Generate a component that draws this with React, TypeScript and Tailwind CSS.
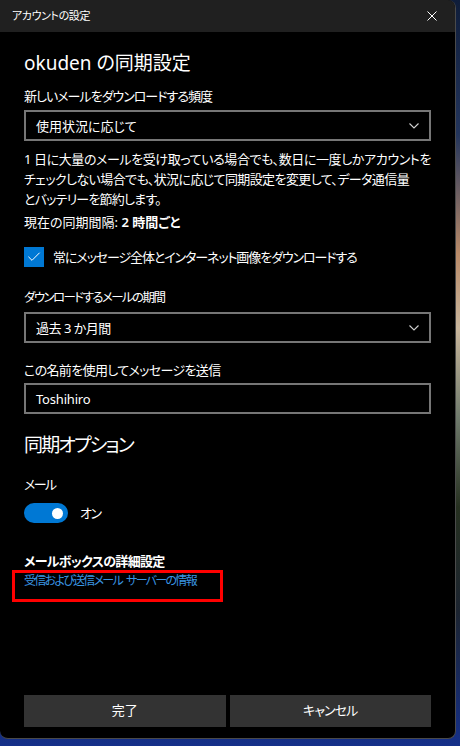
import { Check } from "lucide-react";

const font = "font-['Noto_Sans','Noto_Sans_CJK_JP',sans-serif] [font-feature-settings:'palt']";

const Chevron = () => (
  <svg width="10" height="6" viewBox="0 0 10 6" className="text-[#d0d0d0]">
    <path d="M0.5 0.5 L5 5 L9.5 0.5" fill="none" stroke="currentColor" strokeWidth="1.1" />
  </svg>
);

const SelectBox = ({ value, tracking }: { value: string; tracking: string }) => (
  <div className="flex items-center justify-between h-[31px] border-2 border-[#767676] pl-[10px] pr-[10px]">
    <span className={"text-[13px] leading-[20px] text-white " + tracking}>{value}</span>
    <Chevron />
  </div>
);

const App = () => {
  return (
    <div
      className={
        "w-[460px] h-[746px] overflow-hidden bg-[linear-gradient(180deg,#0f1d3a_0%,#23355c_18%,#b98a68_34%,#c9b69c_44%,#6f7a6c_56%,#263020_68%,#1c2430_82%,#15308a_100%)] " +
        font
      }
    >
      <div className="w-[456px] h-[739px] flex flex-col bg-black border-r border-b border-[#4a4a4a] rounded-tr-[8px] rounded-b-[8px] overflow-hidden">
        {/* title bar */}
        <div className="h-[32px] shrink-0 bg-[#202020] flex items-center justify-between pl-[12px] pr-[18px]">
          <span className="text-[11px] tracking-[-0.4px] text-white">アカウントの設定</span>
          <svg width="10" height="10" viewBox="0 0 10 10" className="text-white">
            <path d="M0.5 0.5 L9.5 9.5 M9.5 0.5 L0.5 9.5" fill="none" stroke="currentColor" strokeWidth="1" />
          </svg>
        </div>

        <div className="flex-1 flex flex-col px-[24px] relative text-white">
          <h1 className="mt-[17px] text-[19px] leading-[28px] font-normal">okuden の同期設定</h1>

          <div className="mt-[9px] text-[13px] leading-[20px] tracking-[-1px]">新しいメールをダウンロードする頻度</div>
          <div className="mt-[4px]">
            <SelectBox value="使用状況に応じて" tracking="tracking-[0px]" />
          </div>

          <div className="mt-[8px] text-[13px] leading-[20px] whitespace-nowrap">
            <div className="tracking-[-0.4px]">1 日に大量のメールを受け取っている場合でも、数日に一度しかアカウントを</div>
            <div className="tracking-[-0.6px]">チェックしない場合でも、状況に応じて同期設定を変更して、データ通信量</div>
            <div className="tracking-[-0.8px]">とバッテリーを節約します。</div>
          </div>

          <div className="mt-[3px] text-[13px] leading-[20px]">
            現在の同期間隔: <span className="font-semibold">2 時間ごと</span>
          </div>

          <div className="mt-[15px] flex items-center gap-[9px]">
            <div className="w-[20px] h-[20px] bg-[#0078d4] flex items-center justify-center">
              <Check className="w-[16px] h-[16px] text-white" strokeWidth={1.5} />
            </div>
            <span className="text-[13px] leading-[20px] tracking-[-1.1px]">
              常にメッセージ全体とインターネット画像をダウンロードする
            </span>
          </div>

          <div className="mt-[21px] text-[12.5px] leading-[20px] tracking-[-1.6px]">ダウンロードするメールの期間</div>
          <div className="mt-[4px]">
            <SelectBox value="過去 3 か月間" tracking="tracking-[-0.5px]" />
          </div>

          <div className="mt-[17px] text-[13px] leading-[20px] tracking-[-0.65px]">この名前を使用してメッセージを送信</div>
          <div className="mt-[3px] h-[31px] border-2 border-[#767676] pl-[10px] flex items-center">
            <span className="text-[13px] leading-[20px] tracking-[-0.2px]">Toshihiro</span>
          </div>

          <h2 className="mt-[17px] text-[19px] leading-[28px] tracking-[-1.8px] font-normal">同期オプション</h2>

          <div className="mt-[15px] text-[13px] leading-[20px] tracking-[-1.6px]">メール</div>
          <div className="mt-[9px] flex items-center gap-[12px]">
            <div className="w-[44px] h-[20px] rounded-full bg-[#0078d4] flex items-center justify-end pr-[5px]">
              <div className="w-[11px] h-[11px] rounded-full bg-white" />
            </div>
            <span className="text-[13px] leading-[20px] tracking-[-1.4px]">オン</span>
          </div>

          <div className="mt-[29px] text-[13px] leading-[19px] tracking-[-0.7px] font-semibold">メールボックスの詳細設定</div>
          <div className="text-[12px] leading-[20px] tracking-[-1.7px] text-[#3a95e2]">
            受信および送信メール<span className="inline-block w-[4px]" />サーバーの情報
          </div>

          {/* annotation box */}
          <div className="absolute left-[12px] top-[538px] w-[211px] h-[32px] border-[3px] border-[#ff0000]" />

          <div className="mt-auto mb-[11px] flex gap-[4px]">
            <button className="flex-1 h-[32px] bg-[#333333] text-[13px]">完了</button>
            <button className="flex-1 h-[32px] bg-[#333333] text-[13px] tracking-[-0.9px]">キャンセル</button>
          </div>
        </div>
      </div>
    </div>
  );
};

export default App;
